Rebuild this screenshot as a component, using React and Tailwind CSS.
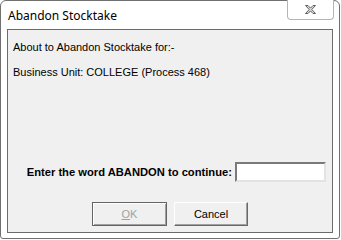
import React from 'react';

const CloseGlyph = () => (
  <svg width="13" height="11" viewBox="0 0 13 11" fill="none">
    <path
      d="M1.5 1.5h2.5l2.5 2.6 2.5-2.6h2.5l-3.7 4 3.7 4h-2.5l-2.5-2.6-2.5 2.6h-2.5l3.7-4z"
      stroke="#5f5f5f"
      strokeWidth="1"
      strokeLinejoin="round"
      fill="#dcdcdc"
    />
  </svg>
);

const App = () => {
  return (
    <div className="w-[341px] h-[240px] bg-white">
      <div className="w-[340px] h-[239px] bg-white border border-[#707070] rounded-t-[6px] rounded-b-[3px] flex flex-col font-['Liberation_Sans',Arial,sans-serif]">
        {/* Title bar */}
        <div className="h-[28px] flex justify-between items-start">
          <div className="pl-[7px] pt-[7px] text-[12px] leading-[16px] text-black font-['Noto_Sans',sans-serif]">
            Abandon Stocktake
          </div>
          <div className="mr-[5px] -mt-px w-[47px] h-[20px] bg-white border border-[#b5b5b5] border-t-0 rounded-b-[4px] flex items-center justify-center">
            <CloseGlyph />
          </div>
        </div>

        {/* Client area */}
        <div className="mx-[6px] h-[204px] bg-[#f0f0f0] border border-[#6b6b6b] flex flex-col text-[11px] leading-[14px] text-black">
          <div className="pt-[10px] pl-[5px]">About to Abandon Stocktake for:-</div>
          <div className="pt-[11px] pl-[5px]">Business Unit: COLLEGE (Process 468)</div>

          <div className="flex-1" />

          <div className="flex items-center justify-end gap-[3px] pr-[6px] h-[20px]">
            <span className="font-bold text-[11.2px]">Enter the word ABANDON to continue:</span>
            <div className="w-[91px] h-[20px] bg-white border-2 border-t-[#7a7a7a] border-l-[#7a7a7a] border-b-[#e3e3e3] border-r-[#e3e3e3]" />
          </div>

          <div className="mt-[20px] mb-[6px] flex justify-center gap-[7px]">
            <div className="w-[75px] h-[24px] border border-[#646464] bg-[#f0f0f0] shadow-[inset_1px_1px_0_#ffffff,inset_-1px_-1px_0_#a0a0a0] flex items-center justify-center text-[#a0a0a0]">
              <span>
                <span className="underline">O</span>K
              </span>
            </div>
            <div className="w-[74px] h-[24px] bg-[#f0f0f0] border border-t-white border-l-white border-b-[#696969] border-r-[#696969] shadow-[inset_-1px_-1px_0_#a0a0a0] flex items-center justify-center">
              Cancel
            </div>
          </div>
        </div>
      </div>
    </div>
  );
};

export default App;
